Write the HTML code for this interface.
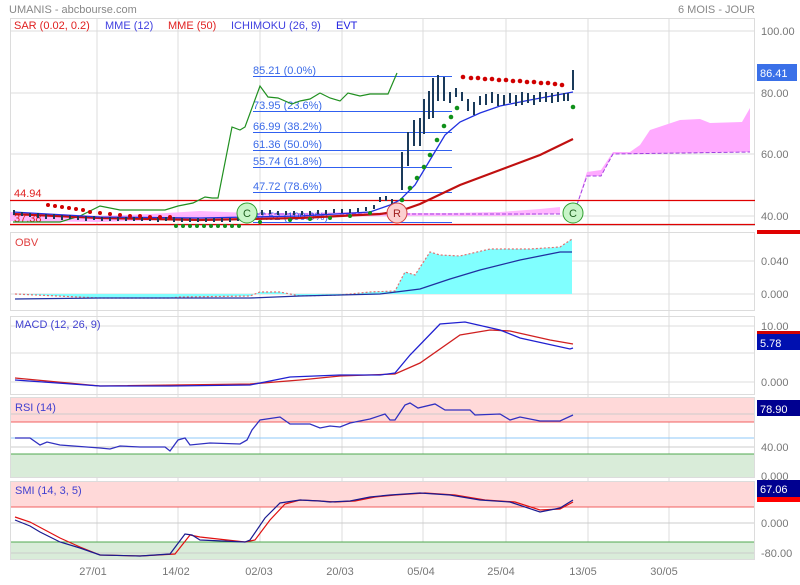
<!DOCTYPE html>
<html><head><meta charset="utf-8"><style>
body{margin:0;background:#fff;width:800px;height:580px;overflow:hidden;font-family:"Liberation Sans",sans-serif}
svg text{font-family:"Liberation Sans",sans-serif;font-size:11px}
</style></head><body>
<svg width="800" height="580" xmlns="http://www.w3.org/2000/svg">
<text x="9" y="13" fill="#888" font-size="12">UMANIS - abcbourse.com</text>
<text x="755" y="13" fill="#888" font-size="12" text-anchor="end">6 MOIS - JOUR</text>

<!-- panel frames & grids -->
<g stroke="#dcdcdc" fill="none">
<rect x="10.5" y="18.5" width="744" height="207"/>
<rect x="10.5" y="232.5" width="744" height="78"/>
<rect x="10.5" y="316.5" width="744" height="78"/>
<rect x="10.5" y="397.5" width="744" height="80"/>
<rect x="10.5" y="481.5" width="744" height="78"/>
<path d="M10 31H755M10 93H755M10 154H755M10 216H755M10 261H755M10 294H755M10 326H755M10 353H755M10 382H755M10 414H755M10 447H755M10 476H755M10 523H755M10 553H755"/>
<path d="M97 18V560M178 18V560M260 18V560M342 18V560M423 18V560M506 18V560M588 18V560M669 18V560"/>
</g>

<!-- RSI/SMI zones -->
<rect x="11" y="398" width="743" height="24" fill="#ffd9d9"/>
<rect x="11" y="454" width="743" height="23" fill="#d9ecd9"/>
<rect x="11" y="482" width="743" height="25" fill="#ffd9d9"/>
<rect x="11" y="542" width="743" height="17" fill="#d9ecd9"/>
<g stroke="#ccc"><path d="M11 414H754M11 447H754M11 523H754M11 553H754"/></g>
<path d="M11 422H754M11 507H754" stroke="#f06060"/>
<path d="M11 438H754" stroke="#8fc8f8"/>
<path d="M11 454H754M11 542H754" stroke="#50a850"/>

<!-- main labels -->
<text x="14" y="29" fill="#e02020">SAR (0.02, 0.2)</text>
<text x="105" y="29" fill="#4040e0">MME (12)</text>
<text x="168" y="29" fill="#e02020">MME (50)</text>
<text x="231" y="29" fill="#4040e0">ICHIMOKU (26, 9)</text>
<text x="336" y="29" fill="#2020e0">EVT</text>

<!-- ichimoku cloud -->
<path d="M10 212 L60 214 L100 216 L150 214 L200 211 L250 213 L300 213 L350 212 L400 213 L450 213 L500 212 L540 209 L560 207 L560 214 L500 216 L400 216 L300 217 L200 219 L100 222 L10 221Z" fill="#ffaaff" opacity=".85"/>
<path d="M573 216 L587 172 L601 170 L613 152 L630 152 L640 145 L650 130 L665 125 L680 120 L700 119 L710 123 L742 122 L750 108 L750 152 L613 154 L601 176 L587 176Z" fill="#ffaaff"/>
<path d="M573 216 L587 176 L601 176 L613 154 L750 152" fill="none" stroke="#a040e0" stroke-dasharray="4,2"/>
<path d="M250 214H560" fill="none" stroke="#a040e0" stroke-dasharray="4,2"/>

<!-- fib lines -->
<g stroke="#3060f0"><path d="M253 76.5H452M253 111.5H452M253 132.5H452M253 150.5H452M253 167.5H452M253 192.5H452M253 222.5H452"/></g>
<g fill="#3a6ae8">
<text x="253" y="74">85.21  (0.0%)</text>
<text x="253" y="109">73.95  (23.6%)</text>
<text x="253" y="130">66.99  (38.2%)</text>
<text x="253" y="148">61.36  (50.0%)</text>
<text x="253" y="165">55.74  (61.8%)</text>
<text x="253" y="190">47.72  (78.6%)</text>
<text x="253" y="220">37.52  (100.0%)</text>
</g>

<!-- red support lines -->
<path d="M10 200.5H755M10 224.5H755" stroke="#e00000" stroke-width="1.3"/>
<text x="14" y="197" fill="#e02020" font-size="12">44.94</text>
<text x="14" y="222" fill="#e02020" font-size="12">37.38</text>

<!-- green lagging -->
<polyline fill="none" stroke="#209020" stroke-width="1.2" points="13,222 60,222 80,216 100,206 120,210 145,210 165,210 178,206 193,203 205,197 212,198 218,198 232,127 240,130 245,127 260,86 268,97 278,98 292,104 300,101 310,99 320,93 330,98 340,101 348,93 360,96 370,94 388,94 397,73"/>

<!-- MMEs -->
<polyline fill="none" stroke="#c01010" stroke-width="2.2" points="13,214 100,218 200,220 300,218 380,214 400,211 420,204 460,185 500,170 540,155 573,139"/>
<polyline fill="none" stroke="#2030e0" stroke-width="1.3" points="13,212 100,217 200,218 300,216 370,212 390,205 400,200 415,185 430,160 445,135 460,122 480,113 500,106 530,100 573,92"/>

<!-- bars -->
<g stroke="#1a3a5a" stroke-width="2">
<path d="M14 210v5M22 212v4M30 213v4M38 213v5M46 214v5M54 214v5M62 215v5M70 215v4M78 216v4M86 216v5M94 216v4M102 217v4M110 217v4M118 217v4M126 217v4M134 217v4M142 217v4M150 217v4M158 217v5M166 217v4M174 217v5M182 218v4M190 218v4M198 218v4M206 218v4M214 218v4M222 218v4M230 218v4M238 217v4M246 215v4M254 213v4M262 210v5M270 210v4M278 211v4M286 211v4M294 211v4M302 211v4M310 211v4M318 210v4M326 210v4M334 209v4M342 209v4M350 209v4M358 208v4M366 207v4M374 205v4M380 197v5M386 196v5M392 199v6M402 152v38M408 132v34M414 120v26M420 118v28M424 99v35M429 91v28M433 78v40M438 75v26M444 77v24M450 92v11M456 88v9M462 92v9M468 99v12M474 102v13M480 96v9M486 94v11M492 92v11M498 94v12M504 95v10M510 93v10M516 95v11M522 92v13M528 93v10M534 95v10M540 92v10M546 92v10M552 93v10M558 92v10M564 93v8M568 93v8M573 70v20"/>
</g>

<!-- SAR dots -->
<g fill="#d00000">
<circle cx="48" cy="205" r="2"/><circle cx="55" cy="206" r="2"/><circle cx="62" cy="207" r="2"/><circle cx="69" cy="208" r="2"/><circle cx="76" cy="209" r="2"/><circle cx="83" cy="210" r="2"/><circle cx="90" cy="212" r="2"/><circle cx="100" cy="213" r="2"/><circle cx="110" cy="214" r="2"/><circle cx="120" cy="215" r="2"/><circle cx="130" cy="216" r="2"/><circle cx="140" cy="216" r="2"/><circle cx="150" cy="217" r="2"/><circle cx="160" cy="217" r="2"/><circle cx="170" cy="217" r="2"/>
<circle cx="463" cy="77" r="2.3"/><circle cx="471" cy="78" r="2.3"/><circle cx="478" cy="78" r="2.3"/><circle cx="485" cy="79" r="2.3"/><circle cx="492" cy="79" r="2.3"/><circle cx="499" cy="80" r="2.3"/><circle cx="506" cy="80" r="2.3"/><circle cx="513" cy="81" r="2.3"/><circle cx="520" cy="81" r="2.3"/><circle cx="527" cy="82" r="2.3"/><circle cx="534" cy="82" r="2.3"/><circle cx="541" cy="83" r="2.3"/><circle cx="548" cy="83" r="2.3"/><circle cx="555" cy="84" r="2.3"/><circle cx="562" cy="85" r="2.3"/>
</g>
<g fill="#10901a">
<circle cx="176" cy="226" r="2"/><circle cx="183" cy="226" r="2"/><circle cx="190" cy="226" r="2"/><circle cx="197" cy="226" r="2"/><circle cx="204" cy="226" r="2"/><circle cx="211" cy="226" r="2"/><circle cx="218" cy="226" r="2"/><circle cx="225" cy="226" r="2"/><circle cx="232" cy="226" r="2"/><circle cx="239" cy="226" r="2"/>
<circle cx="260" cy="222" r="2"/><circle cx="290" cy="220" r="2"/><circle cx="310" cy="219" r="2"/><circle cx="330" cy="218" r="2"/><circle cx="350" cy="216" r="2"/><circle cx="370" cy="213" r="2"/>
<circle cx="402" cy="200" r="2.3"/><circle cx="410" cy="188" r="2.3"/><circle cx="417" cy="178" r="2.3"/><circle cx="424" cy="167" r="2.3"/><circle cx="430" cy="155" r="2.3"/><circle cx="437" cy="140" r="2.3"/><circle cx="444" cy="126" r="2.3"/><circle cx="451" cy="117" r="2.3"/><circle cx="457" cy="108" r="2.3"/><circle cx="573" cy="107" r="2.3"/>
</g>

<!-- event circles -->
<g font-size="11" text-anchor="middle">
<circle cx="247" cy="213" r="10" fill="#c8f5c8" stroke="#30a030"/><text x="247" y="217" fill="#206020">C</text>
<circle cx="397" cy="213" r="10" fill="#fcd0d0" stroke="#d04040"/><text x="397" y="217" fill="#a02020">R</text>
<circle cx="573" cy="213" r="10" fill="#c8f5c8" stroke="#30a030"/><text x="573" y="217" fill="#206020">C</text>
</g>

<!-- right axis main -->
<g fill="#777" font-size="12">
<text x="761" y="35">100.00</text><text x="761" y="97">80.00</text><text x="761" y="158">60.00</text><text x="761" y="220">40.00</text>
<text x="761" y="265">0.040</text><text x="761" y="298">0.000</text>
<text x="761" y="330">10.00</text><text x="761" y="386">0.000</text>
<text x="761" y="451">40.00</text><text x="761" y="480">0.000</text>
<text x="761" y="527">0.000</text><text x="761" y="557">-80.00</text>
</g>
<rect x="757" y="64" width="40" height="17" fill="#3a70e8"/><text x="760" y="77" fill="#fff" font-size="12">86.41</text>
<rect x="757" y="230" width="43" height="4" fill="#e00000"/>
<rect x="757" y="331" width="43" height="4" fill="#d00000"/>
<rect x="757" y="334" width="43" height="16" fill="#0010b0"/><text x="760" y="347" fill="#fff" font-size="12">5.78</text>
<rect x="757" y="400" width="43" height="16" fill="#000090"/><text x="760" y="413" fill="#fff" font-size="12">78.90</text>
<rect x="757" y="480" width="43" height="17" fill="#000090"/><text x="760" y="493" fill="#fff" font-size="12">67.06</text>
<rect x="757" y="497" width="43" height="5" fill="#ff0000"/>

<!-- OBV -->
<text x="15" y="246" fill="#e04040">OBV</text>
<path d="M15 294 L100 298 L170 298 L180 297 L250 296 L260 292 L280 292 L300 296 L340 295 L370 292 L395 291 L405 272 L415 275 L430 252 L440 255 L460 256 L490 249 L530 249 L560 247 L572 239 L572 294Z" fill="#80ffff"/>
<polyline fill="none" stroke="#e07070" stroke-dasharray="2,2" stroke-width="1.2" points="15,294 100,298 170,298 180,297 250,296 260,292 280,292 300,296 340,295 370,292 395,291 405,272 415,275 430,252 440,255 460,256 490,249 530,249 560,247 572,239"/>
<polyline fill="none" stroke="#2030a0" stroke-width="1.3" points="15,299 100,298 250,298 300,296 380,294 420,289 450,279 480,270 520,260 545,255 560,252 572,252"/>

<!-- MACD -->
<text x="15" y="328" fill="#4040d0">MACD (12, 26, 9)</text>
<polyline fill="none" stroke="#d02020" stroke-width="1.3" points="15,378 100,386 250,384 300,380 340,376 395,374 420,363 460,335 490,330 510,331 550,340 573,344"/>
<polyline fill="none" stroke="#2020d0" stroke-width="1.3" points="15,380 100,386 170,386 250,385 290,377 340,375 380,375 395,373 410,355 440,324 465,322 500,330 520,338 570,349 573,348"/>

<!-- RSI -->
<text x="15" y="411" fill="#4040d0">RSI (14)</text>
<polyline fill="none" stroke="#3030c0" stroke-width="1.3" points="15,438 30,438 40,445 47,442 60,445 100,448 110,449 120,446 140,447 165,447 170,451 178,440 185,438 190,445 210,443 240,444 247,440 252,430 260,420 280,417 290,424 310,424 320,428 330,426 340,427 350,423 370,419 385,414 390,420 395,420 405,405 410,403 418,408 435,404 445,410 470,410 475,415 500,414 510,420 520,417 540,421 560,421 573,415"/>

<!-- SMI -->
<text x="15" y="494" fill="#4040d0">SMI (14, 3, 5)</text>
<polyline fill="none" stroke="#e01010" stroke-width="1.2" points="15,517 30,522 45,530 60,538 80,547 100,555 140,556 175,554 190,535 200,537 245,542 255,540 270,520 285,504 300,500 320,501 335,502 355,501 375,497 395,495 425,493 455,495 485,500 515,502 540,510 560,509 573,502"/>
<polyline fill="none" stroke="#1a1a90" stroke-width="1.2" points="15,520 30,526 40,532 60,542 80,548 100,555 140,556 170,554 185,534 192,535 200,540 245,542 250,540 265,518 280,503 300,500 320,501 330,502 350,501 370,497 390,495 420,493 450,495 480,500 510,502 540,512 560,508 573,500"/>

<!-- x labels -->
<g fill="#777" font-size="12" text-anchor="middle">
<text x="93" y="575">27/01</text><text x="176" y="575">14/02</text><text x="259" y="575">02/03</text><text x="340" y="575">20/03</text><text x="421" y="575">05/04</text><text x="501" y="575">25/04</text><text x="583" y="575">13/05</text><text x="664" y="575">30/05</text>
</g>
</svg>
</body></html>
